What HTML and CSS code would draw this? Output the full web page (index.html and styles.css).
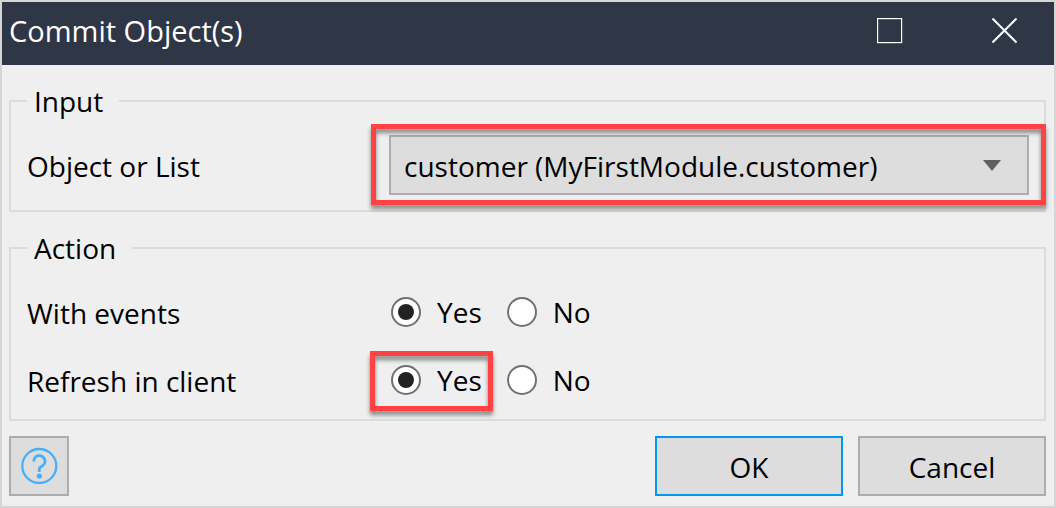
FILE: index.html
```html
<!DOCTYPE html>
<html lang="en">
<head>
<meta charset="utf-8">
<meta name="viewport" content="width=device-width, initial-scale=1">
<title>Commit Object(s)</title>
<link rel="stylesheet" href="styles.css">
</head>
<body>
<main class="dialog">
  <header class="titlebar">
    <h1 class="title">Commit Object(s)</h1>
    <div class="window-controls">
      <button class="window-button" type="button" aria-label="Maximize">
        <svg width="26" height="26" viewBox="0 0 26 26"><rect x="0.6" y="0.6" width="24" height="24" fill="none" stroke="#fff" stroke-width="1.2"/></svg>
      </button>
      <button class="window-button" type="button" aria-label="Close">
        <svg width="26" height="26" viewBox="0 0 26 26"><path d="M0.5 0.5 24.5 24.5M24.5 0.5 0.5 24.5" fill="none" stroke="#fff" stroke-width="2"/></svg>
      </button>
    </div>
  </header>
  <form class="content">
    <fieldset class="group group-input">
      <legend class="legend">Input</legend>
      <div class="row">
        <label class="caption" for="object">Object or List</label>
        <div class="select-box highlight highlight-select">
          <select class="select" id="object">
            <option>customer (MyFirstModule.customer)</option>
          </select>
          <svg class="arrow" width="18" height="12" viewBox="0 0 18 12"><path d="M0 0H18L9 11Z" fill="#606060"/></svg>
        </div>
      </div>
    </fieldset>
    <fieldset class="group group-action">
      <legend class="legend">Action</legend>
      <div class="row" role="radiogroup" aria-labelledby="events">
        <span class="caption" id="events">With events</span>
        <div class="choices">
          <label class="choice"><input class="radio" type="radio" name="events" checked>Yes</label>
          <label class="choice"><input class="radio" type="radio" name="events">No</label>
        </div>
      </div>
      <div class="row" role="radiogroup" aria-labelledby="refresh">
        <span class="caption" id="refresh">Refresh in client</span>
        <div class="choices">
          <label class="choice highlight highlight-choice"><input class="radio" type="radio" name="refresh" checked>Yes</label>
          <label class="choice"><input class="radio" type="radio" name="refresh">No</label>
        </div>
      </div>
    </fieldset>
    <footer class="footer">
      <button class="button button-help" type="button" aria-label="Help">
        <svg width="38" height="38" viewBox="0 0 38 38" fill="none" stroke="#47affa">
          <circle cx="19.3" cy="19" r="17" stroke-width="2.3"/>
          <path d="M13.8 14.5a5.6 5.6 0 1 1 8.6 4.4c-2.1 1.3-3.1 1.5-3.1 3.1v3" stroke-width="2.8"/>
          <circle cx="19.3" cy="29" r="2.6" fill="#47affa" stroke="none"/>
        </svg>
      </button>
      <button class="button button-text button-default" type="submit">OK</button>
      <button class="button button-text" type="button">Cancel</button>
    </footer>
  </form>
</main>
</body>
</html>
```
FILE: styles.css
```css
* {
  box-sizing: border-box;
}

body {
  margin: 0;
  background: #efefef;
  color: #000;
  font: 28px/38px "Open Sans", "Noto Sans", sans-serif;
}

.dialog {
  min-height: 100vh;
  border: 2px solid #d6d6d6;
}

.titlebar {
  display: flex;
  align-items: center;
  justify-content: space-between;
  height: 63px;
  padding: 0 36px 6px 7px;
  background: #2f3646;
  color: #fff;
}

.title {
  margin: 0;
  font-size: 29px;
  font-weight: 400;
}

.window-controls {
  display: flex;
  gap: 89px;
}

.window-button {
  display: flex;
  padding: 0;
  border: 0;
  background: none;
}

.content {
  padding: 17px 8px 10px 7px;
}

.group {
  min-width: 0;
  margin: 0;
  border: 2px solid #dbdbdb;
}

.group-input {
  margin-bottom: 17px;
  padding: 15px 15px 15px 16px;
}

.group-action {
  margin-bottom: 15px;
  padding: 11px 15px 5px 16px;
}

.legend {
  padding: 0 16px 0 7px;
}

.row {
  display: grid;
  grid-template-columns: 362px 1fr;
  align-items: center;
}

.group-action .row {
  height: 68px;
}

.caption {
  padding-top: 2px;
}

.highlight {
  position: relative;
}

.highlight::after {
  content: "";
  position: absolute;
  border: 5px solid #ff4343;
  filter: drop-shadow(0 4px 2px rgba(0, 0, 0, 0.45));
  pointer-events: none;
}

.highlight-select::after {
  inset: -11px -17px -10px -18px;
}

.highlight-choice::after {
  inset: -14px -11px -16px -21px;
}

.select {
  display: block;
  width: 100%;
  height: 60px;
  padding: 2px 56px 0 13px;
  border: 2px solid #adadad;
  border-radius: 0;
  appearance: none;
  background: #ddd;
  color: inherit;
  font: inherit;
}

.arrow {
  position: absolute;
  top: 25px;
  right: 28px;
  pointer-events: none;
}

.choices {
  display: flex;
  gap: 25px;
  padding-left: 2px;
}

.choice {
  display: flex;
  align-items: center;
  gap: 16px;
  height: 30px;
}

.radio {
  display: grid;
  place-items: center;
  width: 30px;
  height: 30px;
  margin: 0;
  border: 2px solid #707070;
  border-radius: 50%;
  appearance: none;
  background: #fff;
}

.radio:checked::before {
  content: "";
  width: 16px;
  height: 16px;
  border-radius: 50%;
  background: #222;
}

.footer {
  display: flex;
  gap: 15px;
}

.button {
  display: flex;
  align-items: center;
  justify-content: center;
  height: 60px;
  padding: 0;
  border: 2px solid #adadad;
  background: #ddd;
  color: inherit;
  font: inherit;
}

.button-text {
  width: 188px;
  padding-top: 2px;
}

.button-help {
  width: 60px;
  margin-right: auto;
}

.button-default {
  border-color: #0099ee;
}
```
